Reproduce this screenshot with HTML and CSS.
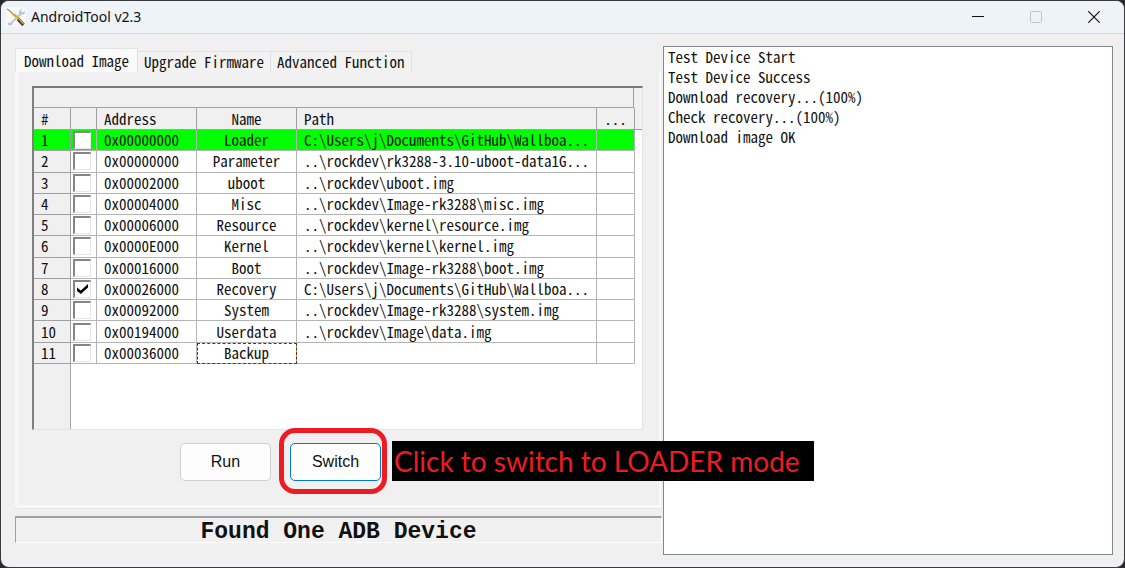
FILE: index.html
```html
<!DOCTYPE html>
<html lang="en">
<head>
<meta charset="utf-8">
<title>AndroidTool v2.3</title>
<link rel="stylesheet" href="styles.css">
</head>
<body>
<div class="window">
  <header class="titlebar">
    <svg class="app-icon" viewBox="0 0 20 20" aria-hidden="true">
      <rect width="20" height="20" fill="#f7f8f8"/>
      <path d="M16 1.500 L13 4 L13 7 L4.500 15.500 L1.500 16 L2.500 18.500 L6 18 L7 15.500 L15 8 L18.500 7 L19 4 L16.500 5.500 L15 4.500 Z" fill="#b9c6d2"/>
      <path d="M1 2 L4 4 L9 9.500" fill="none" stroke="#b98a50" stroke-width="1.200"/>
      <path d="M8 7.500 L13 12" stroke="#e0b02c" stroke-width="2.500"/>
      <path d="M12 12 L17.500 18" stroke="#4a4230" stroke-width="3.400"/>
      <path d="M12.500 11.500 L17.500 17" stroke="#d3a935" stroke-width="1.200"/>
    </svg>
    <h1 class="title">AndroidTool v2.3</h1>
    <div class="controls">
      <button class="control" aria-label="Minimize"><svg viewBox="0 0 12 12"><path d="M0 5.500H12" stroke="#111"/></svg></button>
      <button class="control" aria-label="Maximize" disabled><svg viewBox="0 0 12 12"><rect x=".5" y=".5" width="11" height="11" rx="1" fill="none" stroke="#c0c4c8"/></svg></button>
      <button class="control" aria-label="Close"><svg viewBox="0 0 12 12"><path d="M.3.3L11.700 11.700M11.700.3L.3 11.700" stroke="#111" stroke-width="1.200"/></svg></button>
    </div>
  </header>
  <main class="content">
    <section class="left">
      <div class="tabs" role="tablist">
        <button class="tab tab-active" role="tab" aria-selected="true">Download Image</button>
        <button class="tab" role="tab">Upgrade Firmware</button>
        <button class="tab" role="tab">Advanced Function</button>
      </div>
      <div class="panel">
        <div class="list">
          <div class="list-band"><div class="list-band-cell"></div></div>
          <div class="list-head-area">
          <table class="images">
            <colgroup><col class="c-num"><col class="c-check"><col class="c-addr"><col class="c-name"><col><col class="c-more"></colgroup>
            <thead><tr><th>#</th><th></th><th>Address</th><th class="name">Name</th><th>Path</th><th class="more">...</th></tr></thead>
            <tbody>
              <tr class="selected"><th>1</th><td class="check"><input type="checkbox" aria-label="Loader"></td><td>0x00000000</td><td class="name">Loader</td><td>C:\Users\j\Documents\GitHub\Wallboa...</td><td></td></tr>
              <tr><th>2</th><td class="check"><input type="checkbox" aria-label="Parameter"></td><td>0x00000000</td><td class="name">Parameter</td><td>..\rockdev\rk3288-3.10-uboot-data1G...</td><td></td></tr>
              <tr><th>3</th><td class="check"><input type="checkbox" aria-label="uboot"></td><td>0x00002000</td><td class="name">uboot</td><td>..\rockdev\uboot.img</td><td></td></tr>
              <tr><th>4</th><td class="check"><input type="checkbox" aria-label="Misc"></td><td>0x00004000</td><td class="name">Misc</td><td>..\rockdev\Image-rk3288\misc.img</td><td></td></tr>
              <tr><th>5</th><td class="check"><input type="checkbox" aria-label="Resource"></td><td>0x00006000</td><td class="name">Resource</td><td>..\rockdev\kernel\resource.img</td><td></td></tr>
              <tr><th>6</th><td class="check"><input type="checkbox" aria-label="Kernel"></td><td>0x0000E000</td><td class="name">Kernel</td><td>..\rockdev\kernel\kernel.img</td><td></td></tr>
              <tr><th>7</th><td class="check"><input type="checkbox" aria-label="Boot"></td><td>0x00016000</td><td class="name">Boot</td><td>..\rockdev\Image-rk3288\boot.img</td><td></td></tr>
              <tr><th>8</th><td class="check"><input type="checkbox" aria-label="Recovery" checked></td><td>0x00026000</td><td class="name">Recovery</td><td>C:\Users\j\Documents\GitHub\Wallboa...</td><td></td></tr>
              <tr><th>9</th><td class="check"><input type="checkbox" aria-label="System"></td><td>0x00092000</td><td class="name">System</td><td>..\rockdev\Image-rk3288\system.img</td><td></td></tr>
              <tr><th>10</th><td class="check"><input type="checkbox" aria-label="Userdata"></td><td>0x00194000</td><td class="name">Userdata</td><td>..\rockdev\Image\data.img</td><td></td></tr>
              <tr><th>11</th><td class="check"><input type="checkbox" aria-label="Backup"></td><td>0x00036000</td><td class="name focused">Backup</td><td></td><td></td></tr>
            </tbody>
          </table>
          </div>
        </div>
        <div class="actions">
          <button class="btn">Run</button>
          <div class="marked">
            <button class="btn btn-default">Switch</button>
            <div class="callout">Click to switch to LOADER mode</div>
          </div>
        </div>
      </div>
      <div class="status" role="status">Found One ADB Device</div>
    </section>
    <section class="log" aria-label="Log">
      <p>Test Device Start</p>
      <p>Test Device Success</p>
      <p>Download recovery...(100%)</p>
      <p>Check recovery...(100%)</p>
      <p>Download image OK</p>
    </section>
  </main>
</div>
</body>
</html>
```

FILE: styles.css
```css
* { box-sizing: border-box; }

body {
  margin: 0;
  background: #29292e;
  color: #111;
  font: 15px/20px "Noto Sans CJK SC", monospace;
  font-feature-settings: "hwid";
}

button { font: inherit; font-feature-settings: inherit; color: inherit; padding: 0; border: 0; background: none; }

.window {
  display: flex;
  flex-direction: column;
  min-height: 100vh;
  border: 1px solid #3a3a3e;
  border-radius: 9px;
  background: #f0f0f0;
  overflow: hidden;
}

.titlebar {
  display: flex;
  align-items: center;
  height: 33px;
  padding: 0 1px 0 5px;
  background: #eef3f8;
  border-bottom: 1px solid #d5dae0;
}
.app-icon { width: 20px; height: 20px; }
.title {
  flex: 1;
  margin: 0 0 0 5px;
  font: 14px/20px "Noto Sans", sans-serif;
  font-feature-settings: normal;
}
.controls { display: flex; }
.control { display: flex; align-items: center; justify-content: center; width: 58px; height: 32px; }
.control svg { width: 12px; height: 12px; }

.content {
  flex: 1;
  display: grid;
  grid-template-columns: 647fr 450fr;
  gap: 1px;
  padding: 12px 11px 12px 14px;
}

.left { display: flex; flex-direction: column; padding: 2px 0 12px; min-width: 0; }

.tabs { display: flex; align-items: flex-end; }
.tab {
  height: 21px;
  padding: 0 6px;
  border-top: 1px solid #e4e4e4;
  border-right: 1px solid #e0e0e0;
  background: #f2f2f2;
}
.tab-active {
  height: 24px;
  padding: 0 8px;
  border-left: 1px solid #e4e4e4;
  background: #fafafa;
}

.panel {
  flex: 1;
  display: flex;
  flex-direction: column;
  margin-right: 1px;
  padding: 14px 16px 24px 14px;
  border: solid #f8f8f8;
  border-width: 0 2px 3px 3px;
  box-shadow: 0 1px 0 #e6e6e6;
}

.list {
  flex: 1;
  border: solid;
  border-width: 2px 1px 1px 2px;
  border-color: #787878 #e3e3e3 #e3e3e3 #808080;
  background: linear-gradient(90deg, #f0f0f0 36px, #a6a6a6 36px 37px, #fff 37px);
}
.list-band { height: 20px; padding-right: 8px; background: #f0f0f0; }
.list-band-cell { height: 20px; border: solid #a0a0a0; border-width: 0 1px 1px 0; }
.list-head-area { background: linear-gradient(#f0f0f0 21px, #a0a0a0 21px 22px, transparent 22px); }

.images {
  width: calc(100% - 7px);
  height: 256px;
  table-layout: fixed;
  border-collapse: separate;
  border-spacing: 0;
}
.c-num { width: 37px; }
.c-check { width: 26px; }
.c-addr, .c-name { width: 100px; }
.c-more { width: 38px; }
.images th, .images td {
  height: 21px;
  padding: 0 0 0 7px;
  border: solid #b4b4b4;
  border-width: 0 1px 1px 0;
  font-weight: 400;
  line-height: 18px;
  text-align: left;
  white-space: nowrap;
}
.images td { background: #fff; }
.images th { background: #f0f0f0; border-color: #a0a0a0; }
.images thead th { height: 22px; }
.images .name { padding: 0; text-align: center; }
.images th.more { padding: 0; text-align: center; }
.images .selected th, .images .selected td { background: #0f0; }
.images .check { padding: 0 0 0 2px; }
.images .focused { outline: 1px dashed #6a3008; outline-offset: -1px; }

.check input {
  appearance: none;
  display: block;
  width: 18px;
  height: 18px;
  margin: 0;
  border: solid;
  border-width: 2px 1px 1px 2px;
  border-color: #858585 #e6e6e6 #e6e6e6 #858585;
  background: #fff;
}
.check input:checked::after {
  content: "";
  display: block;
  width: 11px;
  height: 10px;
  margin: 2px;
  background: #000;
  clip-path: polygon(0 35%, 35% 65%, 100% 0, 100% 35%, 35% 100%, 0 70%);
}

.actions { display: flex; gap: 19px; padding: 13px 0 0 148px; }
.btn {
  width: 91px;
  height: 38px;
  border: 1px solid #d0d0d0;
  border-radius: 5px;
  background: #fdfdfd;
  font: 16px/20px "Liberation Sans", Arial, sans-serif;
}
.btn-default { border-color: #0078d4; }

.marked { position: relative; z-index: 1; }
.marked::before {
  content: "";
  position: absolute;
  inset: -15px -6px -13px -11px;
  border: 5px solid #ed1c24;
  border-radius: 16px;
  pointer-events: none;
}
.callout {
  position: absolute;
  top: -2px;
  left: 102px;
  padding: 0 14px 0 2px;
  background: #000;
  color: #ed1c24;
  font: 28px/40px Lato, sans-serif;
  font-feature-settings: normal;
  white-space: nowrap;
}

.status {
  height: 27px;
  margin-top: 8px;
  border: solid;
  border-width: 2px 1px 1px 1px;
  border-color: #a0a0a0 #fff #fff #a0a0a0;
  font: bold 23px/28px "Liberation Mono", monospace;
  font-feature-settings: normal;
  text-align: center;
}

.log {
  padding: 0 4px;
  border: 1px solid #828790;
  background: #fff;
}
.log p { margin: 0; }
```
